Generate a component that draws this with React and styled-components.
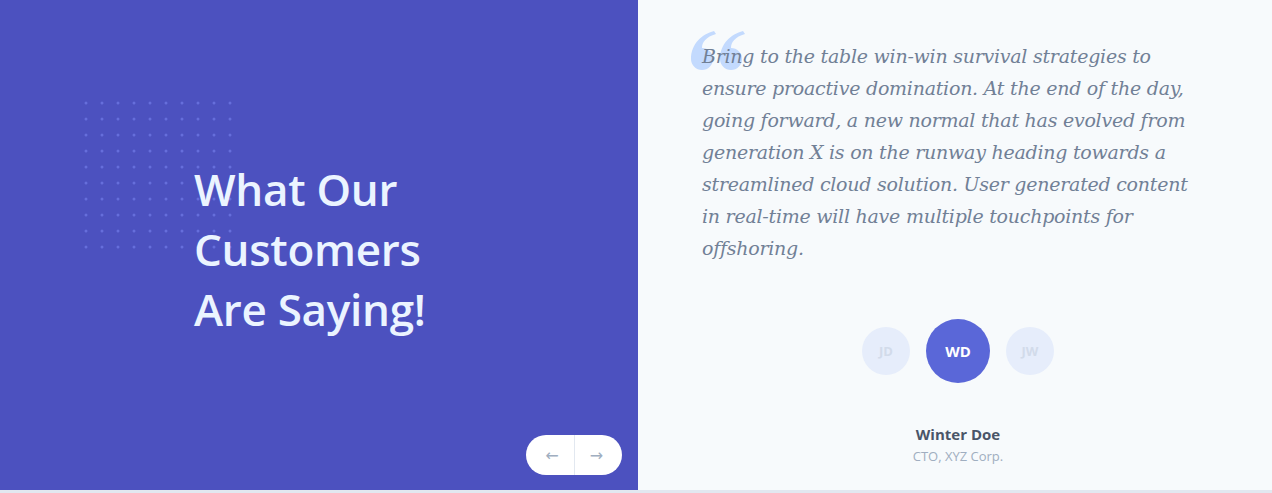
import React from 'react'
import styled, { createGlobalStyle } from 'styled-components'

const GlobalStyle = createGlobalStyle`
  html, body {
    margin: 0;
    padding: 0;
    background: #e2e8f0;
  }
  * {
    box-sizing: border-box;
  }
`

const Section = styled.section`
  display: flex;
  height: 490px;
  font-family: 'Open Sans', 'Noto Sans', sans-serif;
`

const LeftPanel = styled.div`
  position: relative;
  flex: 0 0 638px;
  background: #4c51bf;
  display: flex;
  align-items: center;
  padding-left: 194px;
`

const Dots = styled.svg`
  position: absolute;
  left: 84px;
  top: 101px;
`

const Heading = styled.h2`
  position: relative;
  margin: 0;
  margin-top: 8px;
  color: #ebf4ff;
  font-size: 44px;
  font-weight: 600;
  line-height: 60px;
  letter-spacing: -0.3px;
`

const Pager = styled.div`
  position: absolute;
  right: 16px;
  bottom: 15px;
  display: flex;
  height: 40px;
  border-radius: 20px;
  background: #ffffff;
  overflow: hidden;
`

const ArrowButton = styled.button`
  width: 48px;
  height: 40px;
  border: none;
  background: transparent;
  color: #a0aec0;
  font-size: 16px;
  font-family: 'DejaVu Sans', sans-serif;
  padding: 0;
  padding-${p => (p.$side === 'left' ? 'left: 4px' : 'right: 4px')};
  border-left: ${p => (p.$side === 'right' ? '1px solid #e2e8f0' : 'none')};
  cursor: pointer;
`

const RightPanel = styled.div`
  flex: 1;
  background: #f7fafc;
  display: flex;
  flex-direction: column;
  padding: 40px 0 0 64px;
`

const QuoteWrap = styled.div`
  position: relative;
  height: 268px;
`

const QuoteMark = styled.svg`
  position: absolute;
  left: -12px;
  top: -10px;
`

const Quote = styled.p`
  position: relative;
  margin: 0;
  font-family: 'DejaVu Serif', serif;
  font-style: italic;
  font-size: 19px;
  line-height: 32px;
  color: #718096;
  letter-spacing: -0.25px;
`

const People = styled.div`
  display: flex;
  flex-direction: column;
  align-items: center;
  margin-left: -58px;
`

const Avatars = styled.div`
  display: flex;
  align-items: center;
  gap: 16px;
  margin-top: 11px;
`

const Avatar = styled.div`
  width: ${p => (p.$active ? 64 : 48)}px;
  height: ${p => (p.$active ? 64 : 48)}px;
  border-radius: 50%;
  background: ${p => (p.$active ? '#5a67d8' : '#e6edfb')};
  color: ${p => (p.$active ? '#ffffff' : '#d2dbea')};
  display: flex;
  align-items: center;
  justify-content: center;
  font-size: ${p => (p.$active ? 15 : 13)}px;
  font-weight: 700;
`

const Name = styled.div`
  margin-top: 41px;
  font-size: 15px;
  font-weight: 700;
  color: #4a5568;
  line-height: 20px;
`

const Role = styled.div`
  margin-top: 3px;
  font-size: 13px;
  color: #a0aec0;
  line-height: 18px;
`

function DotGrid() {
  const dots = []
  for (let r = 0; r < 10; r++) {
    for (let c = 0; c < 10; c++) {
      dots.push(<circle key={`${r}-${c}`} cx={2 + c * 16} cy={2 + r * 16} r="1.5" />)
    }
  }
  return (
    <Dots width="150" height="150" fill="#6b74e0" opacity="0.85">
      {dots}
    </Dots>
  )
}

const markPath =
  'M24 1 C12 4 1 14 1 29 A11 11 0 0 0 23 29 A11 11 0 0 0 12 18 C12 12 16 7 26 4 Z'

function QuoteIcon() {
  return (
    <QuoteMark width="58" height="42" viewBox="0 0 58 42" fill="#c3dafe">
      <path d={markPath} />
      <path d={markPath} transform="translate(29 0)" />
    </QuoteMark>
  )
}

export default function App() {
  return (
    <>
      <GlobalStyle />
      <Section>
        <LeftPanel>
          <DotGrid />
          <Heading>
            What Our
            <br />
            Customers
            <br />
            Are Saying!
          </Heading>
          <Pager>
            <ArrowButton $side="left">←</ArrowButton>
            <ArrowButton $side="right">→</ArrowButton>
          </Pager>
        </LeftPanel>
        <RightPanel>
          <QuoteWrap>
            <QuoteIcon />
            <Quote>
              Bring to the table win-win survival strategies to
              <br />
              ensure proactive domination. At the end of the day,
              <br />
              going forward, a new normal that has evolved from
              <br />
              generation X is on the runway heading towards a
              <br />
              streamlined cloud solution. User generated content
              <br />
              in real-time will have multiple touchpoints for
              <br />
              offshoring.
            </Quote>
          </QuoteWrap>
          <People>
            <Avatars>
              <Avatar>JD</Avatar>
              <Avatar $active>WD</Avatar>
              <Avatar>JW</Avatar>
            </Avatars>
            <Name>Winter Doe</Name>
            <Role>CTO, XYZ Corp.</Role>
          </People>
        </RightPanel>
      </Section>
    </>
  )
}
